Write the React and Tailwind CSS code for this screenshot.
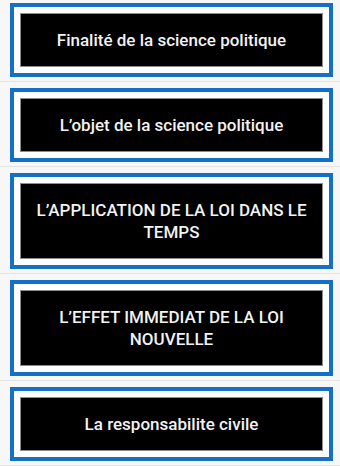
import React from 'react';

const topics = [
  'Finalité de la science politique',
  'L’objet de la science politique',
  'L’APPLICATION DE LA LOI DANS LE TEMPS',
  'L’EFFET IMMEDIAT DE LA LOI NOUVELLE',
  'La responsabilite civile',
];

const TopicCard = ({ title }) => (
  <div className="border-[4px] border-[#1470c6] bg-white p-[6px]">
    <div className="border border-[#8c8c8c] bg-black px-[12px] py-[15px] text-center text-[17px] leading-[22px] font-medium text-[#f2f2f2]">
      {title}
    </div>
  </div>
);

export default function App() {
  return (
    <div className="min-h-[466px] w-[340px] bg-[#f7f7f7] font-['Roboto',sans-serif]">
      {topics.map((title, i) => (
        <div
          key={i}
          className={`${i === 0 ? 'pt-[3px]' : 'pt-[6px]'} pb-[4px] pl-[10px] pr-[7px] border-b border-[#e4e4e4]`}
        >
          <TopicCard title={title} />
        </div>
      ))}
    </div>
  );
}
